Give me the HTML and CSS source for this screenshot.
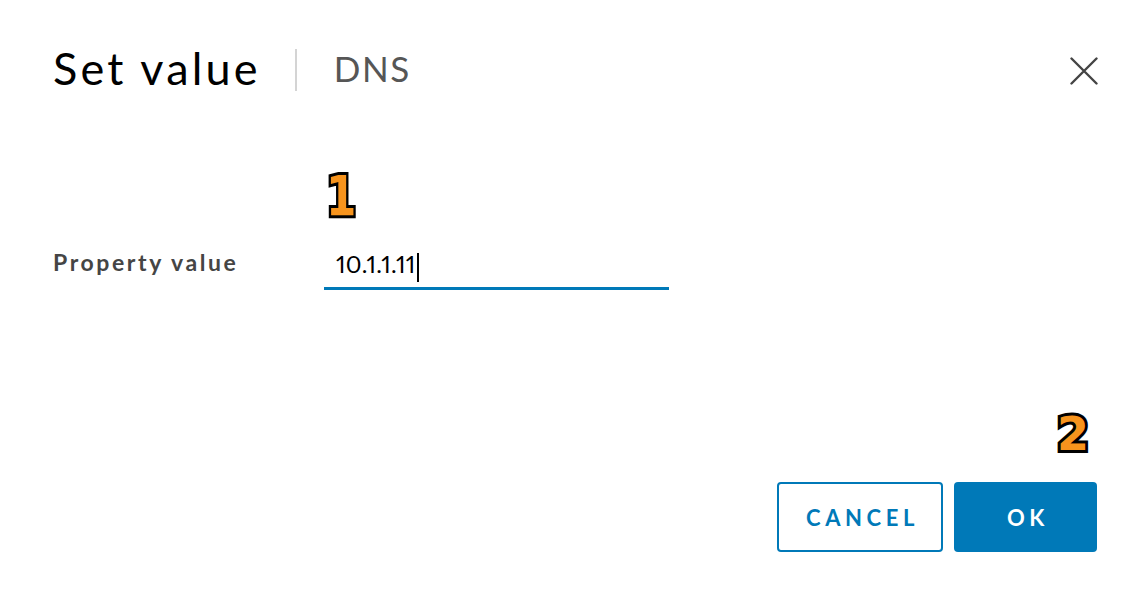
FILE: index.html
```html
<!DOCTYPE html>
<html lang="en">
<head>
<meta charset="utf-8">
<title>Set value</title>
<link rel="stylesheet" href="styles.css">
</head>
<body>
<div class="dialog">
  <header class="header">
    <h1 class="title">Set value</h1>
    <span class="divider"></span>
    <span class="subtitle">DNS</span>
    <button class="close" aria-label="Close">
      <svg width="28" height="28" viewBox="0 0 28 28"><path d="M1.5 1.5 L26.5 26.5 M26.5 1.5 L1.5 26.5" stroke="#444" stroke-width="2.4" stroke-linecap="round" fill="none"/></svg>
    </button>
  </header>
  <main class="body">
    <div class="row">
      <label class="label">Property value</label>
      <div class="field">
        <span class="value">10.1.1.11</span><span class="caret"></span>
        <span class="badge badge-1">1</span>
      </div>
    </div>
  </main>
  <footer class="footer">
    <button class="btn btn-outline">CANCEL</button>
    <button class="btn btn-primary">OK</button>
    <span class="badge badge-2">2</span>
  </footer>
</div>
</body>
</html>
```
FILE: styles.css
```css
html, body {
  margin: 0;
  padding: 0;
  background: #ffffff;
}
.dialog {
  box-sizing: border-box;
  width: 1144px;
  height: 600px;
  padding: 44px 47px 48px 53px;
  display: flex;
  flex-direction: column;
  font-family: "Lato", "Noto Sans", sans-serif;
  color: #000;
}
.header {
  display: flex;
  align-items: center;
  height: 48px;
}
.title {
  margin: 0;
  font-size: 45px;
  font-weight: 400;
  line-height: 48px;
  letter-spacing: 3.2px;
  color: #000;
}
.divider {
  width: 2px;
  height: 42px;
  background: #d4d4d4;
  margin: 0 37px 0 34px;
  position: relative;
  top: 2px;
}
.subtitle {
  font-size: 35px;
  line-height: 48px;
  letter-spacing: 1.5px;
  color: #565656;
}
.close {
  margin-left: auto;
  border: 0;
  background: none;
  padding: 0;
  width: 28px;
  height: 28px;
  position: relative;
  top: 3px;
  left: 1px;
}
.close svg { display: block; }
.body {
  flex: 1;
  padding-top: 152px;
}
.row {
  display: flex;
  align-items: flex-end;
}
.label {
  width: 271px;
  font-size: 23px;
  font-weight: 700;
  color: #454545;
  line-height: 30px;
  letter-spacing: 2.6px;
  padding-bottom: 13px;
}
.field {
  position: relative;
  width: 345px;
  height: 46px;
  border-bottom: 3px solid #0079b8;
  box-sizing: border-box;
  padding: 0 0 8px 12px;
  display: flex;
  align-items: flex-end;
}
.value {
  font-size: 24px;
  line-height: 30px;
  font-variant-numeric: proportional-nums;
  letter-spacing: 0.3px;
  color: #000;
}
.caret {
  display: inline-block;
  width: 2px;
  height: 29px;
  background: #000;
  margin-left: 1px;
  margin-bottom: -3px;
}
.badge {
  position: absolute;
  font-family: "DejaVu Sans", sans-serif;
  font-weight: 700;
  font-size: 46px;
  line-height: 1;
  color: #f7941d;
  -webkit-text-stroke: 6px #000;
  paint-order: stroke fill;
  text-shadow: 1px 2px 2px rgba(0,0,0,0.35);
}
.badge-1 {
  left: 2px;
  top: -76px;
  font-size: 56px;
  transform: scaleX(0.78);
  transform-origin: left top;
}
.footer {
  position: relative;
  display: flex;
  justify-content: flex-end;
  gap: 11px;
}
.btn {
  box-sizing: border-box;
  height: 70px;
  border-radius: 4px;
  font-family: "Lato", "Noto Sans", sans-serif;
  font-weight: 700;
  font-size: 22px;
  letter-spacing: 4.6px;
  padding: 0 0 0 5px;
}
.btn-outline {
  width: 166px;
  border: 2px solid #0079b8;
  background: #fff;
  color: #0079b8;
}
.btn-primary {
  width: 143px;
  border: 0;
  background: #0079b8;
  color: #fff;
}
.badge-2 {
  right: 8px;
  top: -71px;
}
```
